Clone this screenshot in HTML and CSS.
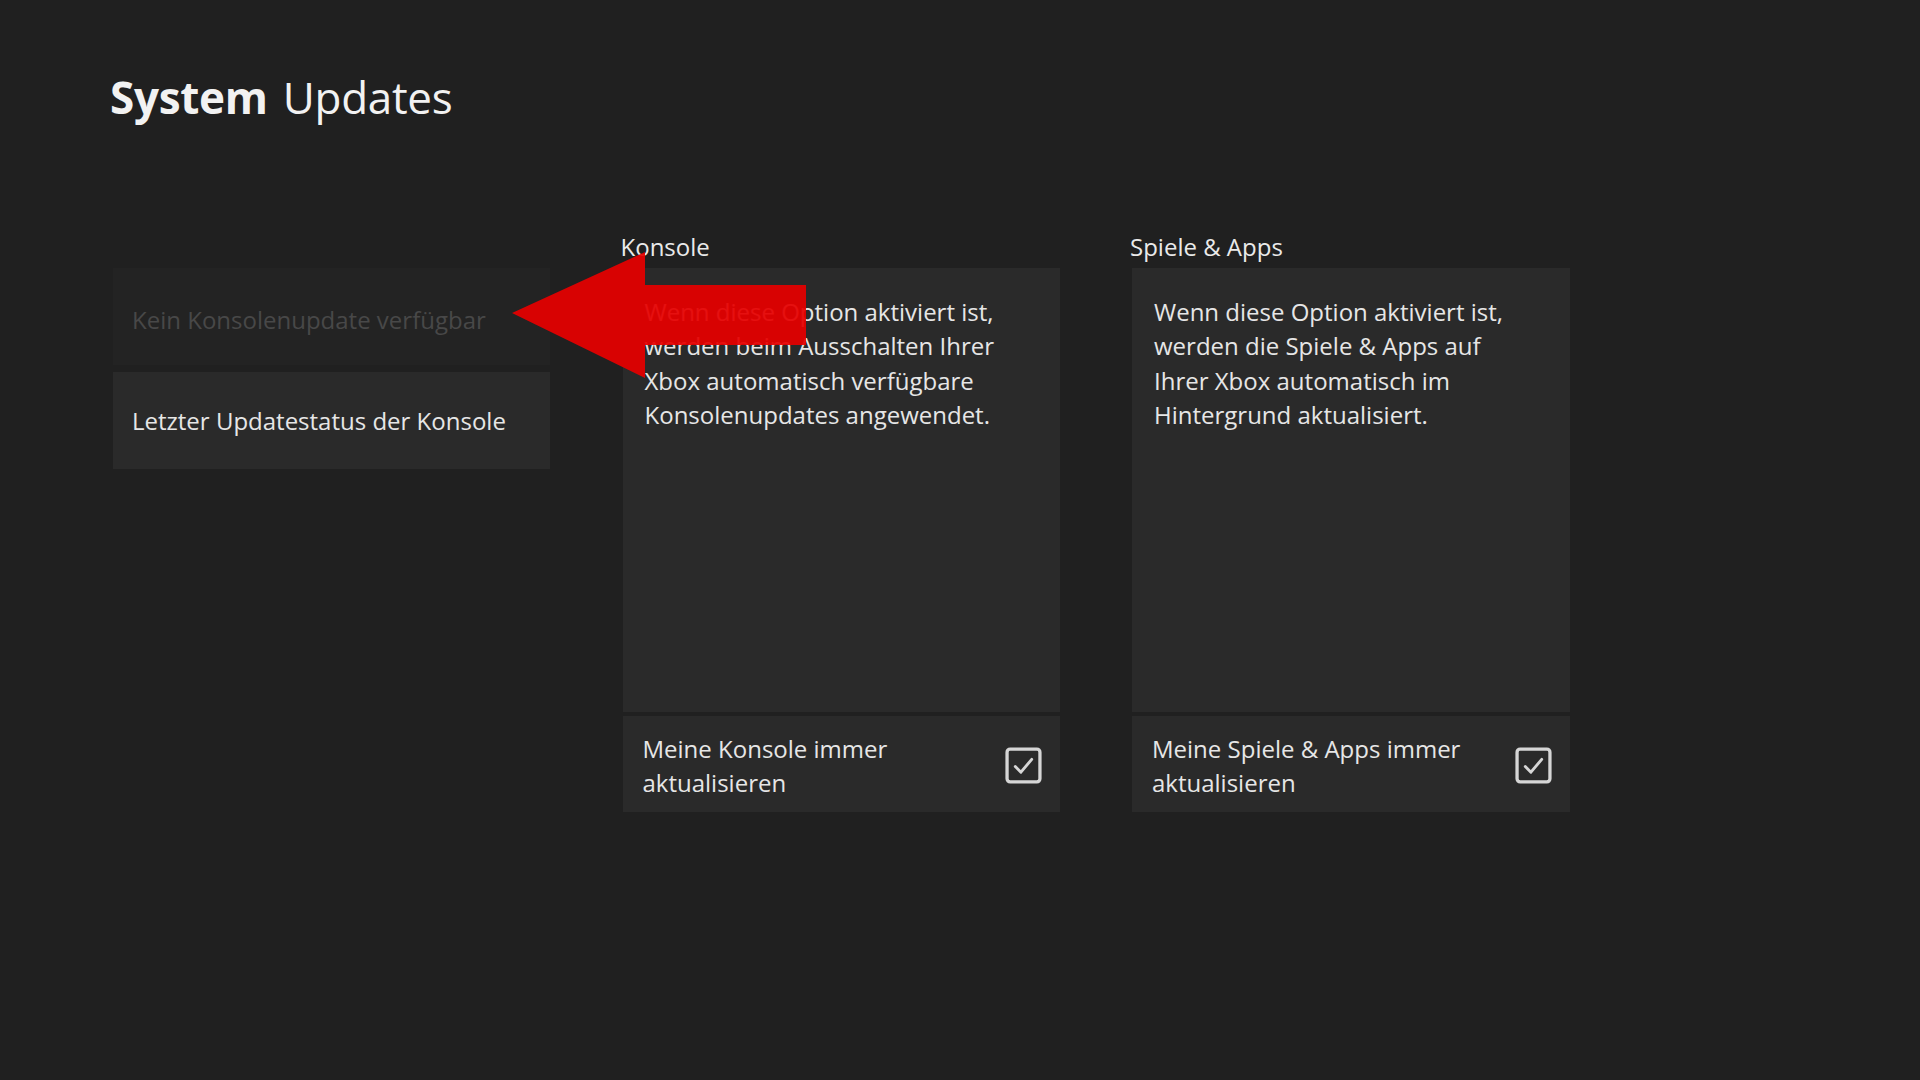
FILE: index.html
```html
<!DOCTYPE html>
<html lang="de">
<head>
<meta charset="utf-8">
<title>System Updates</title>
<link rel="stylesheet" href="styles.css">
</head>
<body>
<main class="page">
  <h1 class="title"><span class="title-strong">System</span> Updates</h1>
  <div class="grid">
    <div class="menu">
      <div class="menu-item menu-item--disabled">Kein Konsolenupdate verfügbar</div>
      <div class="menu-item">Letzter Updatestatus der Konsole</div>
    </div>
    <section class="col col--console">
      <h2 class="col-label">Konsole</h2>
      <div class="desc">Wenn diese Option aktiviert ist, werden beim Ausschalten Ihrer Xbox automatisch verfügbare Konsolenupdates angewendet.</div>
      <div class="toggle">
        <span class="toggle-text">Meine Konsole immer aktualisieren</span>
        <svg class="check" viewBox="0 0 36 36" aria-hidden="true"><rect x="2" y="2" width="32" height="32" rx="3" fill="none" stroke="#d6d6d6" stroke-width="3.2"/><path d="M10 19 L15.5 24.5 L26 12" fill="none" stroke="#d6d6d6" stroke-width="2.8" stroke-linejoin="round" stroke-linecap="round"/></svg>
      </div>
    </section>
    <section class="col col--apps">
      <h2 class="col-label">Spiele &amp; Apps</h2>
      <div class="desc">Wenn diese Option aktiviert ist, werden die Spiele &amp; Apps auf Ihrer Xbox automatisch im Hintergrund aktualisiert.</div>
      <div class="toggle">
        <span class="toggle-text">Meine Spiele &amp; Apps immer aktualisieren</span>
        <svg class="check" viewBox="0 0 36 36" aria-hidden="true"><rect x="2" y="2" width="32" height="32" rx="3" fill="none" stroke="#d6d6d6" stroke-width="3.2"/><path d="M10 19 L15.5 24.5 L26 12" fill="none" stroke="#d6d6d6" stroke-width="2.8" stroke-linejoin="round" stroke-linecap="round"/></svg>
      </div>
    </section>
  </div>
  <svg class="arrow" viewBox="0 0 300 130" aria-hidden="true"><polygon points="0,61 133,0 133,33 294,33 294,93 133,93 133,126" fill="#e60000"/></svg>
</main>
</body>
</html>
```
FILE: styles.css
```css
html, body {
  margin: 0;
  padding: 0;
  background: #202020;
}
body {
  width: 1920px;
  height: 1080px;
  overflow: hidden;
  font-family: "Open Sans", "Noto Sans", sans-serif;
  color: #e4e4e4;
}
.page {
  position: relative;
  width: 1920px;
  height: 1080px;
  padding: 67px 0 0 110px;
  box-sizing: border-box;
}
.title {
  margin: 0;
  font-size: 44px;
  font-weight: 400;
  line-height: 60px;
  color: #f2f2f2;
  letter-spacing: -0.3px;
}
.title-strong {
  font-weight: 700;
  margin-right: 4px;
}
.grid {
  margin-top: 105px;
  margin-left: 3px;
  display: grid;
  grid-template-columns: 437px 437px 438px;
  column-gap: 72.5px;
  align-items: start;
}
.menu {
  margin-top: 36px;
  display: flex;
  flex-direction: column;
  gap: 7px;
}
.menu-item {
  height: 97px;
  padding-left: 19px;
  display: flex;
  align-items: center;
  background: #2a2a2a;
  font-size: 24px;
  color: #e6e6e6;
  box-sizing: border-box;
}
.menu-item--disabled {
  background: #232323;
  color: #484848;
  padding-top: 6px;
}
.col {
  display: flex;
  flex-direction: column;
}
.col-label {
  margin: 0 0 6px -2px;
  font-size: 24px;
  font-weight: 400;
  line-height: 30px;
  color: #eaeaea;
}
.desc {
  height: 444px;
  box-sizing: border-box;
  padding: 27px 42px 0 22px;
  background: #2a2a2a;
  font-size: 24px;
  line-height: 34.3px;
  color: #e6e6e6;
}
.toggle {
  margin-top: 4px;
  height: 96px;
  box-sizing: border-box;
  padding: 3px 18px 0 20px;
  background: #2a2a2a;
  display: flex;
  align-items: center;
  justify-content: space-between;
}
.toggle-text {
  width: 300px;
  font-size: 24px;
  line-height: 34px;
  color: #e6e6e6;
}
.col--apps .toggle-text {
  width: 340px;
}
.check {
  width: 37px;
  height: 37px;
  flex: none;
}
.arrow {
  position: absolute;
  left: 512px;
  top: 252px;
  width: 300px;
  height: 130px;
  opacity: 0.93;
}
```
